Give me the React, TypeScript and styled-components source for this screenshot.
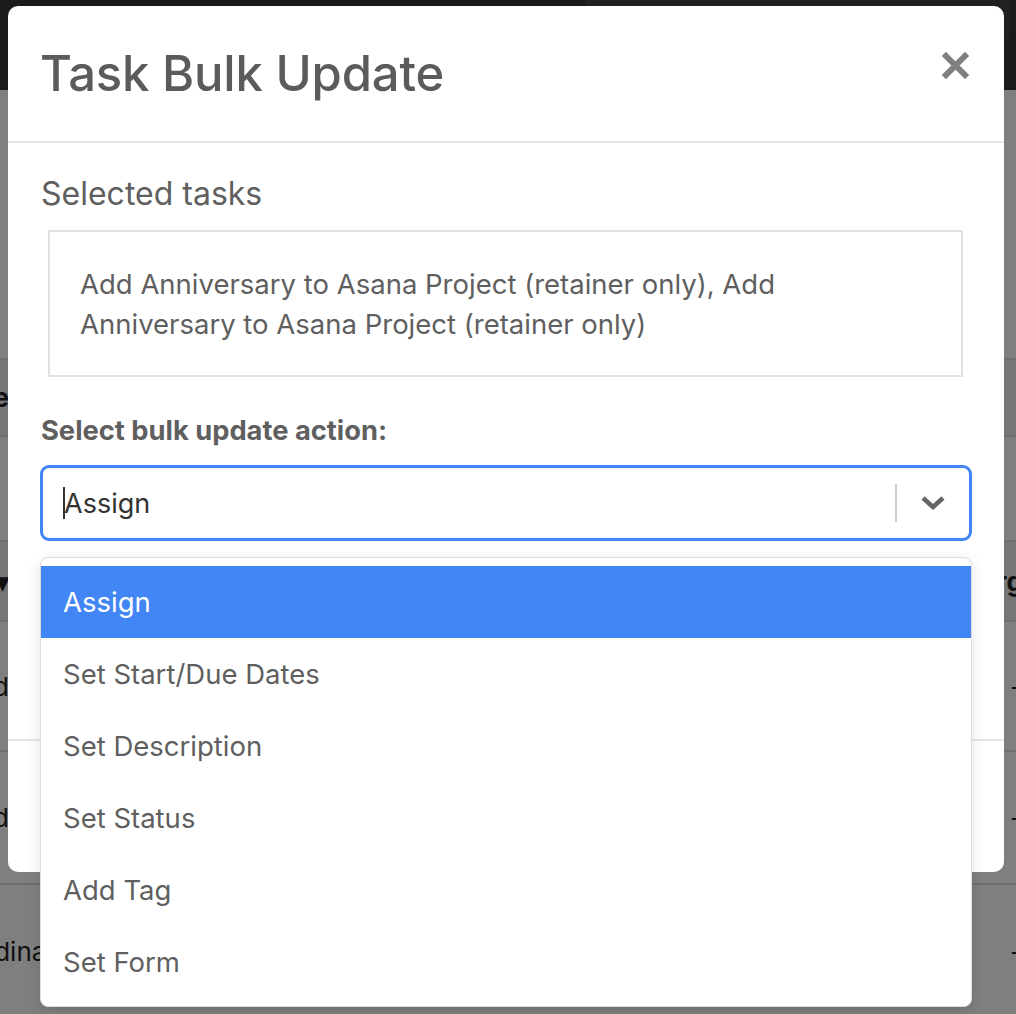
import styled, { createGlobalStyle } from "styled-components";

const GlobalStyle = createGlobalStyle`
  html, body {
    margin: 0;
    padding: 0;
    background: #ffffff;
    font-family: Inter, "Noto Sans", "Liberation Sans", sans-serif;
  }
  * {
    box-sizing: border-box;
  }
`;

const Page = styled.div`
  width: 1016px;
  height: 1014px;
  overflow: hidden;
  position: relative;
  background: #ffffff;
`;

const TopBar = styled.div`
  height: 90px;
  background: #363636;
  display: flex;
  align-items: flex-start;
`;

const SearchBox = styled.div`
  margin-left: auto;
  margin-right: 6px;
  width: 425px;
  height: 40px;
  background: #434343;
  border-radius: 0 0 6px 6px;
`;

const Toolbar = styled.div`
  height: 268px;
`;

const Row = styled.div<{ $h: number; $shade?: boolean }>`
  height: ${({ $h }) => $h}px;
  display: flex;
  align-items: center;
  border-top: 2px solid #dcdfe3;
  background: ${({ $shade }) => ($shade ? "#ececec" : "#ffffff")};
  font-size: 26px;
  color: #222;
`;

const EdgeCell = styled.div<{ $w: number; $bold?: boolean }>`
  width: ${({ $w }) => $w}px;
  flex: none;
  display: flex;
  justify-content: flex-end;
  white-space: nowrap;
  font-weight: ${({ $bold }) => ($bold ? 700 : 400)};
`;

const TailCell = styled.div<{ $bold?: boolean; $pad?: number }>`
  margin-left: auto;
  width: 50px;
  padding-left: ${({ $pad }) => $pad ?? 0}px;
  white-space: nowrap;
  font-weight: ${({ $bold }) => ($bold ? 700 : 400)};
`;

const Backdrop = styled.div`
  position: absolute;
  inset: 0;
  background: rgba(0, 0, 0, 0.5);
`;

const Modal = styled.div`
  position: absolute;
  top: 6px;
  left: 8px;
  width: 996px;
  background: #ffffff;
  border-radius: 10px;
  color: #5f5f5f;
`;

const Header = styled.div`
  height: 137px;
  display: flex;
  align-items: center;
  padding: 0 35px 0 32px;
  border-bottom: 2px solid #e3e6ea;
`;

const Title = styled.h1`
  margin: 0;
  font-size: 49px;
  font-weight: 500;
  color: #5b5b5b;
  letter-spacing: -0.2px;
`;

const CloseButton = styled.button`
  margin-left: auto;
  align-self: flex-start;
  margin-top: 46px;
  width: 27px;
  height: 27px;
  padding: 0;
  border: none;
  background: none;
  display: flex;

  svg {
    width: 27px;
    height: 27px;
  }
`;

const Body = styled.div`
  height: 596px;
  padding: 29px 32px 0;
`;

const SectionLabel = styled.div`
  font-size: 32px;
  line-height: 44px;
  margin-left: 1px;
`;

const TaskBox = styled.div`
  margin: 14px 9px 0 8px;
  height: 147px;
  border: 2px solid #e0e0e6;
  padding: 0 60px 0 30px;
  display: flex;
  align-items: center;
  font-size: 27.5px;
  line-height: 40px;
`;

const FieldLabel = styled.div`
  margin-top: 36px;
  font-size: 27.3px;
  font-weight: 700;
  line-height: 36px;
  margin-left: 1px;
`;

const SelectWrap = styled.div`
  position: relative;
  margin-top: 16px;
`;

const Control = styled.div`
  height: 76px;
  border: 3px solid #4285f4;
  border-radius: 9px;
  display: flex;
  align-items: center;
  padding-left: 20px;
  font-size: 27px;
  color: #333;
`;

const Caret = styled.span`
  width: 2px;
  height: 32px;
  background: #333;
  margin-right: -1px;
`;

const Separator = styled.span`
  margin-left: auto;
  width: 2px;
  height: 38px;
  background: #cccccc;
`;

const Chevron = styled.span`
  width: 72px;
  display: flex;
  justify-content: center;

  svg {
    width: 26px;
    height: 18px;
  }
`;

const Menu = styled.ul`
  position: absolute;
  top: calc(100% + 16px);
  left: 0;
  right: 0;
  margin: 0;
  padding: 8px 0;
  list-style: none;
  background: #ffffff;
  border: 1px solid #dcdcdc;
  border-radius: 8px;
  box-shadow: 0 4px 14px rgba(0, 0, 0, 0.12);
`;

const Option = styled.li<{ $active?: boolean }>`
  height: 72px;
  display: flex;
  align-items: center;
  padding-left: 22px;
  font-size: 27.5px;
  color: ${({ $active }) => ($active ? "#ffffff" : "#5f5f5f")};
  background: ${({ $active }) => ($active ? "#4285f4" : "transparent")};
`;

const Footer = styled.div`
  height: 133px;
  border-top: 2px solid #e3e6ea;
  display: flex;
  align-items: center;
  justify-content: flex-end;
  gap: 16px;
  padding: 0 32px;
`;

const FooterButton = styled.button<{ $primary?: boolean }>`
  height: 60px;
  padding: 0 28px;
  border-radius: 8px;
  font-size: 24px;
  font-family: inherit;
  border: none;
  color: #ffffff;
  background: ${({ $primary }) => ($primary ? "#4285f4" : "#8a8f95")};
`;

const actions = [
  "Assign",
  "Set Start/Due Dates",
  "Set Description",
  "Set Status",
  "Add Tag",
  "Set Form",
];

const App = () => {
  return (
    <>
      <GlobalStyle />
      <Page>
        <TopBar>
          <SearchBox />
        </TopBar>
        <Toolbar />
        <Row $h={77} $shade>
          <EdgeCell $w={9} $bold>
            Type
          </EdgeCell>
        </Row>
        <Row $h={105} />
        <Row $h={80} $shade>
          <EdgeCell $w={9} $bold>
            ▾
          </EdgeCell>
          <TailCell $bold>Target</TailCell>
        </Row>
        <Row $h={130}>
          <EdgeCell $w={9}>Assigned</EdgeCell>
          <TailCell $pad={44}>-</TailCell>
        </Row>
        <Row $h={133}>
          <EdgeCell $w={9}>Started</EdgeCell>
          <TailCell $pad={44}>-</TailCell>
        </Row>
        <Row $h={135}>
          <EdgeCell $w={80}>Coordinator</EdgeCell>
          <TailCell $pad={44}>-</TailCell>
        </Row>
        <Backdrop />
        <Modal>
          <Header>
            <Title>Task Bulk Update</Title>
            <CloseButton aria-label="Close">
              <svg viewBox="0 0 27 27">
                <path
                  d="M4 4 L23 23 M23 4 L4 23"
                  stroke="#808080"
                  strokeWidth="6"
                  strokeLinecap="square"
                  fill="none"
                />
              </svg>
            </CloseButton>
          </Header>
          <Body>
            <SectionLabel>Selected tasks</SectionLabel>
            <TaskBox>
              Add Anniversary to Asana Project (retainer only), Add
              Anniversary to Asana Project (retainer only)
            </TaskBox>
            <FieldLabel>Select bulk update action:</FieldLabel>
            <SelectWrap>
              <Control>
                <Caret />
                Assign
                <Separator />
                <Chevron>
                  <svg viewBox="0 0 26 18">
                    <path
                      d="M3 4 L13 13 L23 4"
                      stroke="#666666"
                      strokeWidth="4.5"
                      fill="none"
                    />
                  </svg>
                </Chevron>
              </Control>
              <Menu>
                {actions.map((action, i) => (
                  <Option key={action} $active={i === 0}>
                    {action}
                  </Option>
                ))}
              </Menu>
            </SelectWrap>
          </Body>
          <Footer>
            <FooterButton>Cancel</FooterButton>
            <FooterButton $primary>Update</FooterButton>
          </Footer>
        </Modal>
      </Page>
    </>
  );
};

export default App;
